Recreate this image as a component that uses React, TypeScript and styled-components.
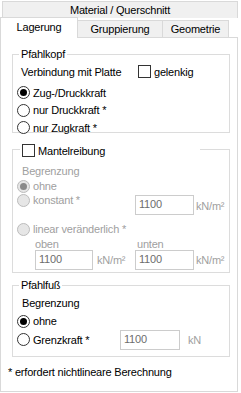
import React from "react";
import styled, { createGlobalStyle, css } from "styled-components";

const GlobalStyle = createGlobalStyle`
  html, body { margin: 0; padding: 0; background: #ffffff; }
  body {
    font-family: "Liberation Sans", Arial, sans-serif;
    font-size: 11px;
    letter-spacing: -0.2px;
    color: #000;
  }
  * { box-sizing: border-box; }
`;

const Screen = styled.div`
  width: 241px;
  height: 393px;
  background: #ffffff;
  overflow: hidden;
`;

const BackTabRow = styled.div`
  display: flex;
  height: 18px;
  padding: 1px 3px 0 2px;
`;

const BackTab = styled.div`
  flex: 1;
  height: 17px;
  display: flex;
  align-items: center;
  justify-content: center;
  background: #f0f0f0;
  border: 1px solid #d9d9d9;
  border-bottom: none;
`;

const TabRow = styled.div`
  display: flex;
  align-items: flex-end;
  height: 19px;
`;

const Tab = styled.div<{ $active?: boolean; $width: number }>`
  width: ${(p) => p.$width}px;
  display: flex;
  align-items: center;
  justify-content: center;
  border: 1px solid #d9d9d9;
  border-bottom: none;
  ${(p) =>
    p.$active
      ? css`
          height: 21px;
          margin-bottom: -1px;
          background: #ffffff;
          position: relative;
          z-index: 1;
          padding-bottom: 2px;
        `
      : css`
          height: 17px;
          background: #f0f0f0;
          margin-left: -1px;
        `}
`;

const Panel = styled.div`
  width: 238px;
  height: 355px;
  border: 1px solid #d9d9d9;
  background: #ffffff;
  padding: 9px 7px 0 11px;
  display: flex;
  flex-direction: column;
`;

const Group = styled.fieldset<{ $mt?: number; $pb?: number }>`
  margin: ${(p) => p.$mt ?? 0}px 0 0 0;
  padding: 0 0 ${(p) => p.$pb ?? 0}px 0;
  border: 1px solid #dcdcdc;
  min-width: 0;
  display: flex;
  flex-direction: column;
`;

const Legend = styled.legend<{ $width?: number; $pt?: number; $ml?: number }>`
  margin-left: ${(p) => p.$ml ?? 6}px;
  padding: ${(p) => p.$pt ?? 0}px 2px 0 2px;
  line-height: 14px;
  height: ${(p) => 14 + (p.$pt ?? 0)}px;
  ${(p) => p.$width && css`width: ${p.$width}px;`}
  display: flex;
  align-items: center;
  gap: 3px;
`;

const Row = styled.div<{ $mt?: number; $pl?: number; $h?: number }>`
  display: flex;
  align-items: center;
  margin-top: ${(p) => p.$mt ?? 0}px;
  padding-left: ${(p) => p.$pl ?? 0}px;
  height: ${(p) => p.$h ?? 13}px;
`;

const Text = styled.span<{ $disabled?: boolean }>`
  color: ${(p) => (p.$disabled ? "#a0a0a0" : "#000")};
  line-height: 14px;
  white-space: nowrap;
`;

const Option = styled.label<{ $width?: number }>`
  display: flex;
  align-items: center;
  gap: 3px;
  height: 13px;
  ${(p) => p.$width && css`width: ${p.$width}px; flex: none;`}
`;

const RadioCircle = styled.span<{ $checked?: boolean; $disabled?: boolean }>`
  flex: none;
  width: 13px;
  height: 13px;
  border-radius: 50%;
  border: 1px solid ${(p) => (p.$disabled ? "#bcbcbc" : "#333333")};
  background: ${(p) => (p.$disabled ? "#e6e6e6" : "#ffffff")};
  display: flex;
  align-items: center;
  justify-content: center;
  &::after {
    content: "";
    display: ${(p) => (p.$checked ? "block" : "none")};
    width: 7px;
    height: 7px;
    border-radius: 50%;
    background: ${(p) => (p.$disabled ? "#8a8a8a" : "#000000")};
  }
`;

const CheckBox = styled.span`
  flex: none;
  width: 13px;
  height: 13px;
  border: 1px solid #333333;
  background: #ffffff;
`;

const Field = styled.div<{ $width: number; $mt?: number }>`
  width: ${(p) => p.$width}px;
  height: 20px;
  flex: none;
  border: 1px solid #cccccc;
  background: #ffffff;
  color: #6d6d6d;
  padding-left: 3px;
  line-height: 17px;
  margin-top: ${(p) => p.$mt ?? 0}px;
`;

const Unit = styled.span<{ $ml?: number }>`
  color: #a0a0a0;
  margin-left: ${(p) => p.$ml ?? 2}px;
  white-space: nowrap;
  line-height: 14px;
`;

const InputRow = styled.div<{ $mt?: number }>`
  display: flex;
  align-items: flex-start;
  margin-top: ${(p) => p.$mt ?? 0}px;
  padding-left: 4px;
`;

const UnitTop = styled(Unit)`
  margin-top: 5px;
`;

const LinearBlock = styled.div`
  display: flex;
  padding-left: 22px;
  margin-top: 2.5px;
`;

const LinearCol = styled.div<{ $width?: number }>`
  display: flex;
  flex-direction: column;
  ${(p) => p.$width && css`width: ${p.$width}px; flex: none;`}
`;

const SmallLabel = styled.span<{ $pl?: number }>`
  color: #a0a0a0;
  height: 12px;
  line-height: 12px;
  padding-left: ${(p) => p.$pl ?? 0}px;
`;

const FieldUnit = styled.div`
  display: flex;
  align-items: center;
  height: 20px;
`;

const Footnote = styled.div`
  margin: 8px 0 0 -4px;
  line-height: 14px;
`;

function Radio({
  label,
  checked,
  disabled,
  width,
}: {
  label: string;
  checked?: boolean;
  disabled?: boolean;
  width?: number;
}) {
  return (
    <Option $width={width}>
      <RadioCircle $checked={checked} $disabled={disabled} />
      <Text $disabled={disabled}>{label}</Text>
    </Option>
  );
}

export default function App() {
  return (
    <>
      <GlobalStyle />
      <Screen>
        <BackTabRow>
          <BackTab>Material / Querschnitt</BackTab>
        </BackTabRow>
        <TabRow>
          <Tab $active $width={78}>Lagerung</Tab>
          <Tab $width={86}>Gruppierung</Tab>
          <Tab $width={67}>Geometrie</Tab>
        </TabRow>
        <Panel>
          <Group $pb={0}>
            <Legend>Pfahlkopf</Legend>
            <Row $mt={3} $h={15} $pl={8}>
              <Text style={{ width: 117 }}>Verbindung mit Platte</Text>
              <Option>
                <CheckBox />
                <Text>gelenkig</Text>
              </Option>
            </Row>
            <Row $mt={7} $pl={4}>
              <Radio label="Zug-/Druckkraft" checked />
            </Row>
            <Row $mt={4.5} $pl={4}>
              <Radio label="nur Druckkraft *" />
            </Row>
            <Row $mt={4.5} $pl={4} style={{ marginBottom: -2 }}>
              <Radio label="nur Zugkraft *" />
            </Row>
          </Group>

          <Group $mt={7.5} $pb={2}>
            <Legend $width={180} $pt={3} $ml={7}>
              <CheckBox />
              <Text>Mantelreibung</Text>
            </Legend>
            <Row $mt={6.5} $h={14} $pl={9}>
              <Text $disabled>Begrenzung</Text>
            </Row>
            <Row $mt={1.5} $pl={4}>
              <Radio label="ohne" checked disabled />
            </Row>
            <InputRow $mt={1}>
              <Radio label="konstant *" disabled width={118} />
              <Field $width={59} $mt={1.5}>1100</Field>
              <UnitTop>kN/m²</UnitTop>
            </InputRow>
            <Row $mt={7.5} $pl={4}>
              <Radio label="linear veränderlich *" disabled />
            </Row>
            <LinearBlock>
              <LinearCol $width={100}>
                <SmallLabel>oben</SmallLabel>
                <FieldUnit>
                  <Field $width={58}>1100</Field>
                  <Unit $ml={4}>kN/m²</Unit>
                </FieldUnit>
              </LinearCol>
              <LinearCol>
                <SmallLabel $pl={2}>unten</SmallLabel>
                <FieldUnit>
                  <Field $width={59}>1100</Field>
                  <Unit>kN/m²</Unit>
                </FieldUnit>
              </LinearCol>
            </LinearBlock>
          </Group>

          <Group $mt={5} $pb={6.5}>
            <Legend>Pfahlfuß</Legend>
            <Row $mt={4} $h={14} $pl={9}>
              <Text>Begrenzung</Text>
            </Row>
            <Row $mt={4.5} $pl={4}>
              <Radio label="ohne" checked />
            </Row>
            <Row $mt={2} $h={20} $pl={4}>
              <Radio label="Grenzkraft *" width={103} />
              <Field $width={60}>1100</Field>
              <Unit $ml={8}>kN</Unit>
            </Row>
          </Group>

          <Footnote>* erfordert nichtlineare Berechnung</Footnote>
        </Panel>
      </Screen>
    </>
  );
}
